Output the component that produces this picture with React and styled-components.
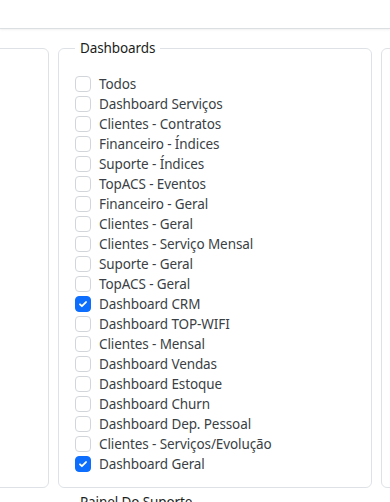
import React from "react";
import styled, { createGlobalStyle } from "styled-components";

const GlobalStyle = createGlobalStyle`
  html, body {
    margin: 0;
    padding: 0;
    background: #ffffff;
    overflow: hidden;
  }
  body {
    font-family: "Noto Sans", "Open Sans", sans-serif;
    font-size: 13.5px;
    letter-spacing: -0.1px;
    color: #212529;
  }
`;

const Page = styled.div`
  width: 390px;
  height: 502px;
  overflow: hidden;
`;

const TopBar = styled.div`
  height: 28px;
  border-bottom: 1px solid #dcdfe2;
  box-shadow: 0 1px 2px rgba(0, 0, 0, 0.06);
`;

const Row = styled.div`
  display: grid;
  grid-template-columns: repeat(3, 314px);
  column-gap: 9px;
  margin-left: -265px;
  margin-top: ${({ $top }) => $top}px;
`;

const Box = styled.fieldset`
  margin: 0;
  padding: 0 16px 13px;
  border: 1px solid #dee2e6;
  border-radius: 6px;
  min-height: ${({ $min }) => $min || 0}px;
  box-sizing: border-box;
`;

const Legend = styled.legend`
  padding: 0 5px;
  font-size: 13.5px;
  line-height: 20px;
  color: #1b1e21;
`;

const List = styled.div`
  display: flex;
  flex-direction: column;
  margin-top: 16px;
`;

const Option = styled.label`
  display: flex;
  align-items: center;
  gap: 8px;
  height: 20px;
  line-height: 20px;
  color: #3a3f45;
  white-space: nowrap;
`;

const Check = styled.span`
  width: 16px;
  height: 16px;
  box-sizing: border-box;
  border-radius: 4px;
  border: 1px solid ${({ $on }) => ($on ? "#0d6efd" : "#d2d6db")};
  background: ${({ $on }) => ($on ? "#0d6efd" : "#ffffff")};
  display: flex;
  align-items: center;
  justify-content: center;
  flex-shrink: 0;
`;

const items = [
  ["Todos", false],
  ["Dashboard Serviços", false],
  ["Clientes - Contratos", false],
  ["Financeiro - Índices", false],
  ["Suporte - Índices", false],
  ["TopACS - Eventos", false],
  ["Financeiro - Geral", false],
  ["Clientes - Geral", false],
  ["Clientes - Serviço Mensal", false],
  ["Suporte - Geral", false],
  ["TopACS - Geral", false],
  ["Dashboard CRM", true],
  ["Dashboard TOP-WIFI", false],
  ["Clientes - Mensal", false],
  ["Dashboard Vendas", false],
  ["Dashboard Estoque", false],
  ["Dashboard Churn", false],
  ["Dashboard Dep. Pessoal", false],
  ["Clientes - Serviços/Evolução", false],
  ["Dashboard Geral", true],
];

const Tick = () => (
  <svg width="12" height="12" viewBox="0 0 20 20">
    <path
      d="m5 10.5 3.2 3.2 6.8-7"
      fill="none"
      stroke="#ffffff"
      strokeWidth="3"
      strokeLinecap="round"
      strokeLinejoin="round"
    />
  </svg>
);

export default function App() {
  return (
    <Page>
      <GlobalStyle />
      <TopBar />
      <Row $top={9}>
        <Box $min={450}>
          <Legend>&nbsp;</Legend>
        </Box>
        <Box>
          <Legend>Dashboards</Legend>
          <List>
            {items.map(([label, on]) => (
              <Option key={label}>
                <Check $on={on}>{on && <Tick />}</Check>
                {label}
              </Option>
            ))}
          </List>
        </Box>
        <Box $min={450}>
          <Legend>&nbsp;</Legend>
        </Box>
      </Row>
      <Row $top={4}>
        <Box $min={100}>
          <Legend>&nbsp;</Legend>
        </Box>
        <Box $min={100}>
          <Legend>Painel Do Suporte</Legend>
        </Box>
        <Box $min={100}>
          <Legend>&nbsp;</Legend>
        </Box>
      </Row>
    </Page>
  );
}
